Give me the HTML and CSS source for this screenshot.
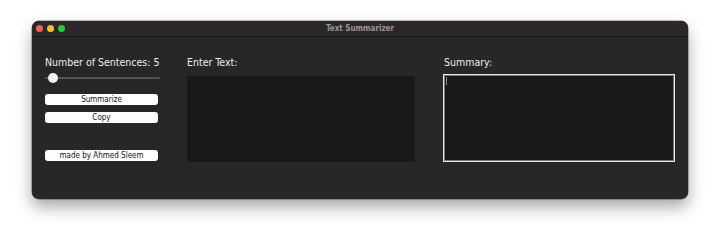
FILE: index.html
```html
<!DOCTYPE html>
<html>
<head>
<meta charset="utf-8">
<link rel="stylesheet" href="styles.css">
</head>
<body>
<div class="stage">
  <div class="window">
    <div class="titlebar">
      <div class="lights">
        <span class="light red"></span>
        <span class="light yellow"></span>
        <span class="light green"></span>
      </div>
      <div class="title">Text Summarizer</div>
    </div>
    <div class="content">
      <div class="col left">
        <div class="label">Number of Sentences: 5</div>
        <div class="slider"><div class="track"></div><div class="thumb"></div></div>
        <div class="btn first">Summarize</div>
        <div class="btn">Copy</div>
        <div class="btn credit">made by Ahmed Sleem</div>
      </div>
      <div class="col">
        <div class="label">Enter Text:</div>
        <div class="textbox input"></div>
      </div>
      <div class="col">
        <div class="label">Summary:</div>
        <div class="textbox summary"><span class="caret"></span></div>
      </div>
    </div>
  </div>
</div>
</body>
</html>
```
FILE: styles.css
```css
html, body {
  margin: 0;
  padding: 0;
  background: #ffffff;
  font-family: "DejaVu Sans", "Liberation Sans", sans-serif;
}
.stage {
  width: 720px;
  height: 242px;
  padding: 21px 0 0 32px;
  box-sizing: border-box;
}
.window {
  width: 656px;
  height: 178px;
  background: #272727;
  border-radius: 7px;
  overflow: hidden;
  box-shadow: 0 8px 16px rgba(0,0,0,0.35), 0 0 0 0.5px rgba(0,0,0,0.5);
}
.titlebar {
  height: 15px;
  background: #2c2729;
  border-bottom: 1px solid #1a1a1a;
  display: flex;
  align-items: center;
  position: relative;
}
.lights {
  display: flex;
  gap: 4px;
  padding-left: 4px;
}
.light {
  width: 7px;
  height: 7px;
  border-radius: 50%;
  display: block;
}
.red { background: #fe5f57; }
.yellow { background: #febc2e; }
.green { background: #28c840; }
.title {
  position: absolute;
  left: 0;
  right: 0;
  text-align: center;
  font-family: "DejaVu Sans Condensed", "DejaVu Sans", sans-serif;
  font-size: 8px;
  font-weight: bold;
  color: #9a9597;
  top: 3px;
}
.content {
  display: grid;
  grid-template-columns: 113px 228px 231px;
  column-gap: 29px;
  padding: 19px 14px 0 13px;
}
.col {
  display: flex;
  flex-direction: column;
}
.label {
  font-family: "DejaVu Sans Condensed", "DejaVu Sans", sans-serif;
  font-size: 10.5px;
  line-height: 13px;
  color: #ececec;
  height: 13px;
  white-space: nowrap;
}
.slider {
  position: relative;
  height: 12px;
  margin-top: 3px;
}
.track {
  position: absolute;
  left: 0;
  right: -2px;
  top: 5px;
  height: 2px;
  background: #545454;
  border-radius: 1px;
}
.thumb {
  position: absolute;
  left: 3px;
  top: 1px;
  width: 10px;
  height: 10px;
  border-radius: 50%;
  background: #f2f2f2;
}
.btn {
  height: 11px;
  background: #ffffff;
  border-radius: 3px;
  font-family: "DejaVu Sans Condensed", "DejaVu Sans", sans-serif;
  font-size: 8px;
  line-height: 11px;
  text-align: center;
  color: #111;
  margin-top: 7px;
  white-space: nowrap;
}
.btn.first { margin-top: 10px; }
.btn.credit { margin-top: 27px; }
.textbox {
  background: #191919;
}
.input {
  height: 86px;
  width: 228px;
  margin-top: 7px;
}
.summary {
  margin-top: 5px;
  margin-left: -1px;
  height: 86px;
  border: 1.5px solid #e8e8e8;
  box-shadow: inset 0 0 0 1px #777;
  position: relative;
}
.caret {
  position: absolute;
  left: 2px;
  top: 2px;
  width: 1px;
  height: 8px;
  background: #888;
}
```
